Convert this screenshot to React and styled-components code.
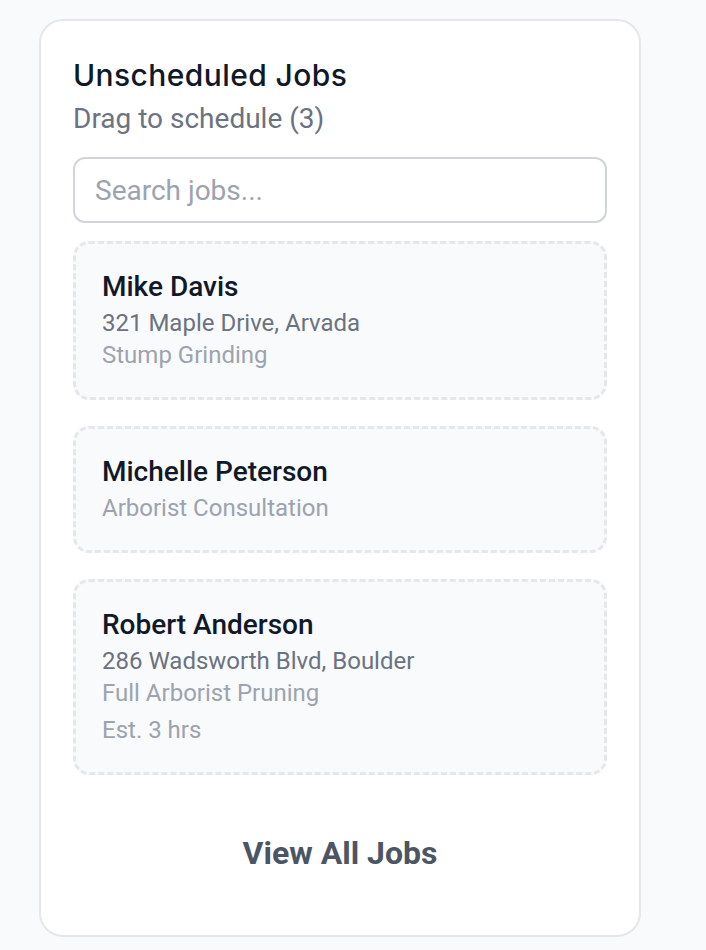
import React, { useState } from "react";
import styled, { createGlobalStyle } from "styled-components";

const GlobalStyle = createGlobalStyle`
  body {
    margin: 0;
    background-color: #f9fafb;
    font-family: Roboto, "Liberation Sans", sans-serif;
  }
`;

const Page = styled.div`
  padding: 19px 0 0 39px;
  min-height: 950px;
  box-sizing: border-box;
`;

const Panel = styled.div`
  width: 602px;
  box-sizing: border-box;
  background-color: #ffffff;
  border: 2px solid #e5e7eb;
  border-radius: 24px;
  padding: 36px 32px 50px;
  display: flex;
  flex-direction: column;
`;

const Title = styled.h2`
  margin: 0;
  font-family: Inter, "Open Sans", sans-serif;
  font-weight: 500;
  font-size: 30px;
  line-height: 36px;
  color: #111827;
  letter-spacing: 0.4px;
`;

const Subtitle = styled.p`
  margin: 10px 0 0;
  font-size: 28px;
  line-height: 32px;
  color: #6b7280;
`;

const SearchInput = styled.input`
  margin-top: 22px;
  height: 66px;
  box-sizing: border-box;
  border: 2px solid #d1d5db;
  border-radius: 12px;
  padding: 0 20px;
  font-family: Roboto, sans-serif;
  font-size: 28px;
  color: #111827;
  outline: none;

  &::placeholder {
    color: #9ca3af;
  }
`;

const JobList = styled.div`
  margin-top: 18px;
  display: flex;
  flex-direction: column;
  gap: 26px;
`;

const JobCard = styled.div`
  border: 3px dashed #e5e7eb;
  border-radius: 16px;
  background-color: #f9fafb;
  padding: 27px 26px 26px;
  cursor: grab;
`;

const JobName = styled.div`
  font-size: 28px;
  line-height: 32px;
  font-weight: 500;
  color: #111827;
  margin-bottom: 4px;
`;

const JobLine = styled.div`
  font-size: 24px;
  line-height: 32px;
  color: ${(props) => (props.muted ? "#9ca3af" : "#6b7280")};
  margin-top: ${(props) => (props.spaced ? "5px" : "0")};
`;

const ViewAllButton = styled.button`
  margin-top: 46px;
  align-self: center;
  background: none;
  border: none;
  padding: 14px 20px;
  font-family: Roboto, sans-serif;
  font-size: 32px;
  line-height: 36px;
  font-weight: 700;
  color: #4b5563;
  cursor: pointer;
`;

const jobs = [
  { name: "Mike Davis", address: "321 Maple Drive, Arvada", service: "Stump Grinding" },
  { name: "Michelle Peterson", service: "Arborist Consultation" },
  {
    name: "Robert Anderson",
    address: "286 Wadsworth Blvd, Boulder",
    service: "Full Arborist Pruning",
    estimate: "Est. 3 hrs",
  },
];

function App() {
  let [query, setQuery] = useState("");

  const filtered = jobs.filter((job) =>
    job.name.toLowerCase().includes(query.toLowerCase())
  );

  return (
    <>
      <GlobalStyle />
      <Page>
        <Panel>
          <Title>Unscheduled Jobs</Title>
          <Subtitle>Drag to schedule ({jobs.length})</Subtitle>
          <SearchInput
            placeholder="Search jobs..."
            value={query}
            onChange={(e) => setQuery(e.target.value)}
          />
          <JobList>
            {filtered.map((job) => (
              <JobCard key={job.name} draggable>
                <JobName>{job.name}</JobName>
                {job.address && <JobLine>{job.address}</JobLine>}
                <JobLine muted>{job.service}</JobLine>
                {job.estimate && (
                  <JobLine muted spaced>
                    {job.estimate}
                  </JobLine>
                )}
              </JobCard>
            ))}
          </JobList>
          <ViewAllButton>View All Jobs</ViewAllButton>
        </Panel>
      </Page>
    </>
  );
}

export default App;
